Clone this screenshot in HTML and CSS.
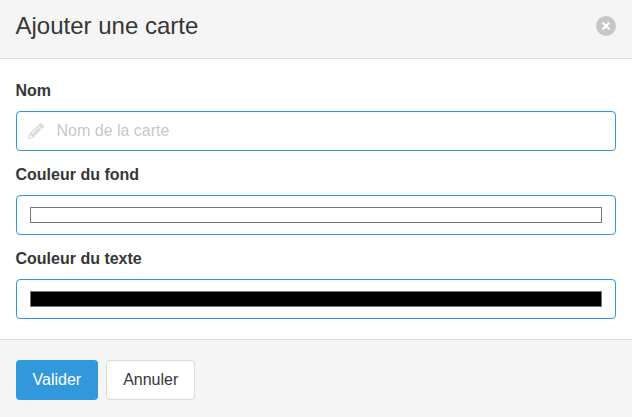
FILE: index.html
```html
<!DOCTYPE html>
<html lang="fr">
<head>
<meta charset="utf-8">
<title>Ajouter une carte</title>
<link rel="stylesheet" href="styles.css">
</head>
<body>
<form class="modal-card">
  <header class="modal-head">
    <p class="modal-title">Ajouter une carte</p>
    <button class="delete" type="button" aria-label="Fermer"></button>
  </header>
  <section class="modal-body">
    <div class="field">
      <label class="label" for="nom">Nom</label>
      <div class="control">
        <input class="input has-icon" id="nom" type="text" placeholder="Nom de la carte">
        <span class="icon">
          <svg width="16" height="16" viewBox="0 0 512 512" fill="currentColor"><path d="M497.9 142.1l-46.1 46.1c-4.7 4.7-12.3 4.7-17 0l-111-111c-4.7-4.7-4.7-12.3 0-17l46.1-46.1c18.7-18.7 49.1-18.7 67.9 0l60.1 60.1c18.8 18.7 18.8 49.1 0 67.9zM284.2 99.8L21.6 362.4.4 483.9c-2.9 16.4 11.4 30.6 27.8 27.8l121.5-21.3 262.600-262.600c4.700-4.700 4.700-12.300 0-17l-111-111c-4.800-4.700-12.400-4.700-17.100 0zM124.100 339.900c-5.500-5.500-5.500-14.300 0-19.800l154-154c5.500-5.500 14.300-5.500 19.800 0s5.500 14.300 0 19.800l-154 154c-5.500 5.500-14.300 5.500-19.800 0zM88 424h48v36.300l-64.500 11.300-31.100-31.100L51.700 376H88v48z"/></svg>
        </span>
      </div>
    </div>
    <div class="field">
      <span class="label">Couleur du fond</span>
      <div class="input"><span class="swatch swatch-background"></span></div>
    </div>
    <div class="field">
      <span class="label">Couleur du texte</span>
      <div class="input"><span class="swatch swatch-text"></span></div>
    </div>
  </section>
  <footer class="modal-foot">
    <button class="button is-info" type="button">Valider</button>
    <button class="button" type="button">Annuler</button>
  </footer>
</form>
</body>
</html>
```
FILE: styles.css
```css
*, *::before, *::after {
  box-sizing: border-box;
}

html, body {
  height: 100%;
  margin: 0;
  overflow: hidden;
}

body, button, input {
  font-family: "Liberation Sans", Arial, sans-serif;
  font-size: 16px;
  line-height: 1.5;
  color: #363636;
}

.modal-card {
  display: flex;
  flex-direction: column;
  height: 100%;
  background: #fff;
}

.modal-head {
  display: flex;
  flex: none;
  align-items: center;
  height: 59px;
  padding: 14px 16px 20px 15.5px;
  background: #f5f5f5;
  border-bottom: 1px solid #dbdbdb;
}

.modal-title {
  flex: 1;
  margin: 0;
  font-size: 24px;
  line-height: 1;
}

.delete {
  position: relative;
  width: 20px;
  height: 20px;
  padding: 0;
  border: 0;
  border-radius: 50%;
  background: rgba(10, 10, 10, .2);
}

.delete::before, .delete::after {
  content: "";
  position: absolute;
  top: 50%;
  left: 50%;
  background: #fff;
  transform: translate(-50%, -50%) rotate(45deg);
}

.delete::before {
  width: 10px;
  height: 2px;
}

.delete::after {
  width: 2px;
  height: 10px;
}

.modal-body {
  flex: none;
  padding: 20px 16px 20px 15.5px;
}

.field + .field {
  margin-top: 12px;
}

.label {
  display: block;
  margin-bottom: 8px;
  font-weight: 700;
}

.control {
  position: relative;
}

.input {
  display: flex;
  align-items: center;
  width: 100%;
  height: 40px;
  padding: 0 13px;
  border: 1px solid #3298dc;
  border-radius: 4px;
  outline: 0;
  background: #fff;
  box-shadow: inset 0 1px 2px rgba(10, 10, 10, .05);
}

.has-icon {
  padding-left: 40px;
}

.input::placeholder {
  color: rgba(54, 54, 54, .3);
  opacity: 1;
}

.icon {
  position: absolute;
  top: 0;
  left: 0;
  display: flex;
  align-items: center;
  justify-content: center;
  width: 40px;
  height: 40px;
  color: #dbdbdb;
}

.swatch {
  flex: 1;
  height: 16px;
  border: 1px solid #777;
}

.swatch-background {
  background: #fff;
}

.swatch-text {
  background: #000;
}

.modal-foot {
  display: flex;
  flex: 1;
  align-items: flex-start;
  gap: 8px;
  padding: 20px 15.5px 0;
  background: #f5f5f5;
  border-top: 1px solid #dbdbdb;
}

.button {
  height: 40px;
  padding: 0 16px;
  border: 1px solid #dbdbdb;
  border-radius: 4px;
  background: #fff;
}

.is-info {
  border-color: transparent;
  background: #3298dc;
  color: #fff;
}
```
